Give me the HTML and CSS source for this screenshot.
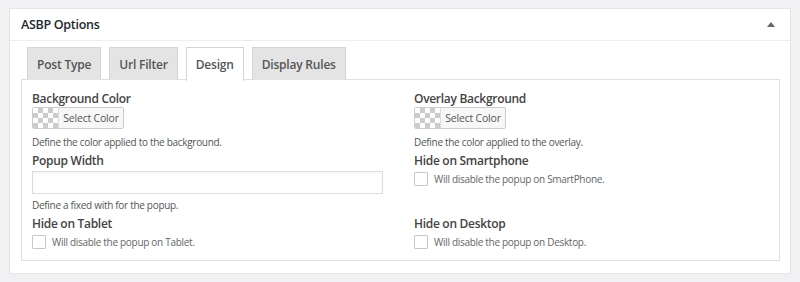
FILE: index.html
```html
<!DOCTYPE html>
<html>
<head>
<meta charset="utf-8">
<link rel="stylesheet" href="styles.css">
</head>
<body>
<div class="card">
  <div class="head">
    <h2 class="title">ASBP Options</h2>
    <span class="toggle"></span>
  </div>
  <div class="inside">
    <div class="tabs">
      <div class="tab">Post Type</div>
      <div class="tab">Url Filter</div>
      <div class="tab active">Design</div>
      <div class="tab">Display Rules</div>
    </div>
    <div class="panel">
      <div class="field">
        <div class="label">Background Color</div>
        <div class="colorbtn"><span class="swatch"></span><span class="btntext">Select Color</span></div>
        <div class="desc">Define the color applied to the background.</div>
      </div>
      <div class="field">
        <div class="label">Overlay Background</div>
        <div class="colorbtn"><span class="swatch"></span><span class="btntext">Select Color</span></div>
        <div class="desc">Define the color applied to the overlay.</div>
      </div>
      <div class="field">
        <div class="label">Popup Width</div>
        <div class="input"></div>
        <div class="desc tight">Define a fixed with for the popup.</div>
      </div>
      <div class="field">
        <div class="label">Hide on Smartphone</div>
        <div class="check"><span class="box"></span><span class="ctext">Will disable the popup on SmartPhone.</span></div>
      </div>
      <div class="field">
        <div class="label">Hide on Tablet</div>
        <div class="check"><span class="box"></span><span class="ctext">Will disable the popup on Tablet.</span></div>
      </div>
      <div class="field">
        <div class="label">Hide on Desktop</div>
        <div class="check"><span class="box"></span><span class="ctext">Will disable the popup on Desktop.</span></div>
      </div>
    </div>
  </div>
</div>
</body>
</html>
```
FILE: styles.css
```css
* { box-sizing: border-box; }
html, body { margin: 0; padding: 0; }
body {
  background: #f1f0f3;
  font-family: "Open Sans", "Noto Sans", sans-serif;
  color: #444;
  padding: 8px 10px 0 9px;
}
.card {
  width: 782px;
  height: 266px;
  background: #fff;
  border: 1px solid #e5e5e5;
}
.head {
  height: 32px;
  border-bottom: 1px solid #eeeeee;
  display: flex;
  align-items: center;
  justify-content: space-between;
  padding: 0 15px 0 11px;
}
.title {
  margin: 0;
  font-size: 12.5px;
  font-weight: 600;
  color: #23282d;
  letter-spacing: -0.3px;
}
.toggle {
  width: 0;
  height: 0;
  border-left: 4px solid transparent;
  border-right: 4px solid transparent;
  border-bottom: 5px solid #666;
  margin-top: -1px;
}
.inside {
  padding: 6px 10px 0 11px;
}
.tabs {
  display: flex;
  gap: 8px;
  padding-left: 6px;
  height: 33px;
}
.tab {
  height: 33px;
  padding: 0 9px;
  background: #e4e4e4;
  border: 1px solid #d5d5d5;
  border-bottom: none;
  font-size: 12px;
  font-weight: 600;
  color: #555;
  display: flex;
  align-items: center;
  letter-spacing: -0.2px;
}
.tab.active {
  background: #fff;
  height: 34px;
  position: relative;
  z-index: 1;
}
.panel {
  border: 1px solid #e0e0e0;
  height: 182px;
  margin-top: -1px;
  padding: 11px 10px 0 10px;
  display: grid;
  grid-template-columns: 382px 1fr;
  row-gap: 4px;
  align-content: start;
}
.label {
  font-size: 12px;
  font-weight: 600;
  line-height: 16px;
  color: #444;
  letter-spacing: -0.3px;
}
.colorbtn {
  width: 92px;
  height: 22px;
  border: 1px solid #ccc;
  border-radius: 2px;
  background: #f7f7f7;
  display: flex;
  align-items: stretch;
  overflow: hidden;
}
.swatch {
  width: 26px;
  background-color: #fff;
  background-image:
    linear-gradient(45deg, #ccc 25%, transparent 25%, transparent 75%, #ccc 75%),
    linear-gradient(45deg, #ccc 25%, transparent 25%, transparent 75%, #ccc 75%);
  background-size: 10px 10px;
  background-position: 0 0, 5px 5px;
  border-right: 1px solid #ddd;
}
.btntext {
  flex: 1;
  font-size: 10.5px;
  color: #555;
  display: flex;
  align-items: center;
  justify-content: center;
  letter-spacing: -0.2px;
}
.desc {
  margin-top: 6px;
  font-size: 10px;
  line-height: 14px;
  color: #555;
  letter-spacing: -0.3px;
}
.desc.tight {
  margin-top: 4px;
}
.input {
  margin-top: 2px;
  width: 351px;
  height: 23px;
  border: 1px solid #ddd;
  box-shadow: inset 0 1px 2px rgba(0,0,0,0.05);
}
.check {
  margin-top: 3px;
  display: flex;
  align-items: center;
  gap: 6px;
}
.box {
  width: 14px;
  height: 14px;
  border: 1px solid #c8c8c8;
  border-radius: 1px;
  background: #fff;
}
.ctext {
  font-size: 10px;
  color: #666;
  letter-spacing: -0.3px;
}
```
